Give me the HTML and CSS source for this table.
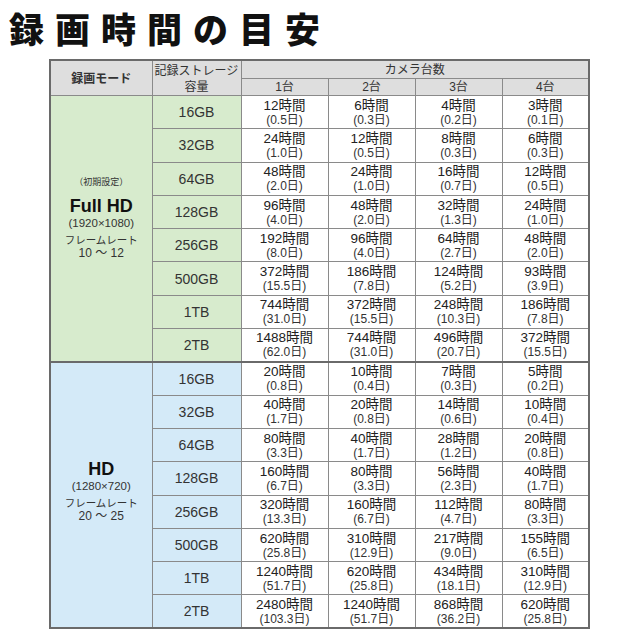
FILE: index.html
```html
<!DOCTYPE html>
<html lang="ja">
<head>
<meta charset="utf-8">
<link rel="stylesheet" href="styles.css">
</head>
<body>
<h1 class="title">録画時間の目安</h1>
<table class="rec">
  <colgroup>
    <col class="c-mode"><col class="c-cap"><col class="c-n"><col class="c-n"><col class="c-n"><col class="c-n">
  </colgroup>
  <thead>
    <tr class="h1">
      <th rowspan="2" class="mode-h">録画モード</th>
      <th rowspan="2" class="cap-h"><div>記録ストレージ</div><div>容量</div></th>
      <th colspan="4">カメラ台数</th>
    </tr>
    <tr class="h2">
      <th>1台</th><th>2台</th><th>3台</th><th>4台</th>
    </tr>
  </thead>
  <tbody class="fhd">
    <tr>
      <td rowspan="8" class="mode">
        <div class="mode-box fhd-box">
          <div class="init">（初期設定）</div>
          <div class="mname">Full HD</div>
          <div class="res">(1920×1080)</div>
          <div class="fr">フレームレート</div>
          <div class="frv">10 ～ 12</div>
        </div>
      </td>
      <td class="cap">16GB</td>
      <td><b>12時間</b><span>(0.5日)</span></td><td><b>6時間</b><span>(0.3日)</span></td><td><b>4時間</b><span>(0.2日)</span></td><td><b>3時間</b><span>(0.1日)</span></td>
    </tr>
    <tr><td class="cap">32GB</td><td><b>24時間</b><span>(1.0日)</span></td><td><b>12時間</b><span>(0.5日)</span></td><td><b>8時間</b><span>(0.3日)</span></td><td><b>6時間</b><span>(0.3日)</span></td></tr>
    <tr><td class="cap">64GB</td><td><b>48時間</b><span>(2.0日)</span></td><td><b>24時間</b><span>(1.0日)</span></td><td><b>16時間</b><span>(0.7日)</span></td><td><b>12時間</b><span>(0.5日)</span></td></tr>
    <tr><td class="cap">128GB</td><td><b>96時間</b><span>(4.0日)</span></td><td><b>48時間</b><span>(2.0日)</span></td><td><b>32時間</b><span>(1.3日)</span></td><td><b>24時間</b><span>(1.0日)</span></td></tr>
    <tr><td class="cap">256GB</td><td><b>192時間</b><span>(8.0日)</span></td><td><b>96時間</b><span>(4.0日)</span></td><td><b>64時間</b><span>(2.7日)</span></td><td><b>48時間</b><span>(2.0日)</span></td></tr>
    <tr><td class="cap">500GB</td><td><b>372時間</b><span>(15.5日)</span></td><td><b>186時間</b><span>(7.8日)</span></td><td><b>124時間</b><span>(5.2日)</span></td><td><b>93時間</b><span>(3.9日)</span></td></tr>
    <tr><td class="cap">1TB</td><td><b>744時間</b><span>(31.0日)</span></td><td><b>372時間</b><span>(15.5日)</span></td><td><b>248時間</b><span>(10.3日)</span></td><td><b>186時間</b><span>(7.8日)</span></td></tr>
    <tr><td class="cap">2TB</td><td><b>1488時間</b><span>(62.0日)</span></td><td><b>744時間</b><span>(31.0日)</span></td><td><b>496時間</b><span>(20.7日)</span></td><td><b>372時間</b><span>(15.5日)</span></td></tr>
  </tbody>
  <tbody class="hd">
    <tr>
      <td rowspan="8" class="mode">
        <div class="mode-box hd-box">
          <div class="mname">HD</div>
          <div class="res">(1280×720)</div>
          <div class="fr">フレームレート</div>
          <div class="frv">20 ～ 25</div>
        </div>
      </td>
      <td class="cap">16GB</td>
      <td><b>20時間</b><span>(0.8日)</span></td><td><b>10時間</b><span>(0.4日)</span></td><td><b>7時間</b><span>(0.3日)</span></td><td><b>5時間</b><span>(0.2日)</span></td>
    </tr>
    <tr><td class="cap">32GB</td><td><b>40時間</b><span>(1.7日)</span></td><td><b>20時間</b><span>(0.8日)</span></td><td><b>14時間</b><span>(0.6日)</span></td><td><b>10時間</b><span>(0.4日)</span></td></tr>
    <tr><td class="cap">64GB</td><td><b>80時間</b><span>(3.3日)</span></td><td><b>40時間</b><span>(1.7日)</span></td><td><b>28時間</b><span>(1.2日)</span></td><td><b>20時間</b><span>(0.8日)</span></td></tr>
    <tr><td class="cap">128GB</td><td><b>160時間</b><span>(6.7日)</span></td><td><b>80時間</b><span>(3.3日)</span></td><td><b>56時間</b><span>(2.3日)</span></td><td><b>40時間</b><span>(1.7日)</span></td></tr>
    <tr><td class="cap">256GB</td><td><b>320時間</b><span>(13.3日)</span></td><td><b>160時間</b><span>(6.7日)</span></td><td><b>112時間</b><span>(4.7日)</span></td><td><b>80時間</b><span>(3.3日)</span></td></tr>
    <tr><td class="cap">500GB</td><td><b>620時間</b><span>(25.8日)</span></td><td><b>310時間</b><span>(12.9日)</span></td><td><b>217時間</b><span>(9.0日)</span></td><td><b>155時間</b><span>(6.5日)</span></td></tr>
    <tr><td class="cap">1TB</td><td><b>1240時間</b><span>(51.7日)</span></td><td><b>620時間</b><span>(25.8日)</span></td><td><b>434時間</b><span>(18.1日)</span></td><td><b>310時間</b><span>(12.9日)</span></td></tr>
    <tr><td class="cap">2TB</td><td><b>2480時間</b><span>(103.3日)</span></td><td><b>1240時間</b><span>(51.7日)</span></td><td><b>868時間</b><span>(36.2日)</span></td><td><b>620時間</b><span>(25.8日)</span></td></tr>
  </tbody>
</table>
</body>
</html>
```
FILE: styles.css
```css
html, body {
  margin: 0;
  padding: 0;
  background: #fff;
}
body {
  width: 640px;
  height: 640px;
  overflow: hidden;
  font-family: "Liberation Sans", "Noto Sans CJK JP", sans-serif;
  color: #222;
}
.title {
  margin: 0;
  padding: 6px 0 0 9px;
  height: 54px;
  box-sizing: border-box;
  font-family: "Noto Sans CJK JP", sans-serif;
  font-weight: 900;
  font-size: 35px;
  line-height: 44px;
  letter-spacing: 11px;
  color: #111;
}
.rec {
  margin: 5px 0 0 49px;
  border-collapse: collapse;
  border: 2px solid #6a6a6a;
  table-layout: fixed;
  width: 540px;
}
.c-mode { width: 102px; }
.c-cap { width: 89px; }
.c-n { width: 87px; }
.rec th, .rec td {
  border: 1px solid #8a8a8a;
  padding: 0;
  text-align: center;
  vertical-align: middle;
}
.rec th {
  background: #dedede;
  font-weight: normal;
  font-size: 12px;
  line-height: 14px;
  color: #333;
}
.rec .h1 th { height: 17px; }
.rec .h2 th { height: 16px; }
.rec th.mode-h {
  font-family: "Noto Sans CJK JP", sans-serif;
  font-weight: bold;
  font-size: 12px;
}
.rec th.cap-h {
  font-family: "Noto Sans CJK JP", sans-serif;
  font-size: 12px;
}
.cap-h div {
  line-height: 16px;
  height: 16px;
}
.rec tbody tr { height: 33.3px; }
.rec td {
  background: #fff;
}
.rec td b {
  display: block;
  font-weight: normal;
  font-size: 13.5px;
  line-height: 15px;
  color: #222;
}
.rec td span {
  display: block;
  font-size: 12px;
  line-height: 14px;
  color: #333;
}
.rec td.cap {
  font-size: 14px;
  color: #333;
}
.fhd td.cap, .fhd td.mode { background: #d7ebcd; }
.hd td.cap, .hd td.mode { background: #d4eaf8; }
.hd tr:first-child td { border-top: 2px solid #6a6a6a; }
.mode-box {
  display: flex;
  flex-direction: column;
  align-items: center;
  color: #333;
}
.fhd-box { padding-bottom: 22px; }
.hd-box { padding-bottom: 8px; }
.init {
  font-family: "Noto Sans CJK JP", sans-serif;
  font-size: 9px;
  line-height: 13px;
  margin-bottom: 9px;
}
.mname {
  font-weight: bold;
  font-size: 18px;
  line-height: 19px;
  color: #111;
}
.res {
  font-size: 11.5px;
  line-height: 15px;
}
.fr {
  font-family: "Noto Sans CJK JP", sans-serif;
  font-size: 10.5px;
  line-height: 15px;
  margin-top: 1px;
}
.frv {
  font-size: 12px;
  line-height: 13px;
}
```
